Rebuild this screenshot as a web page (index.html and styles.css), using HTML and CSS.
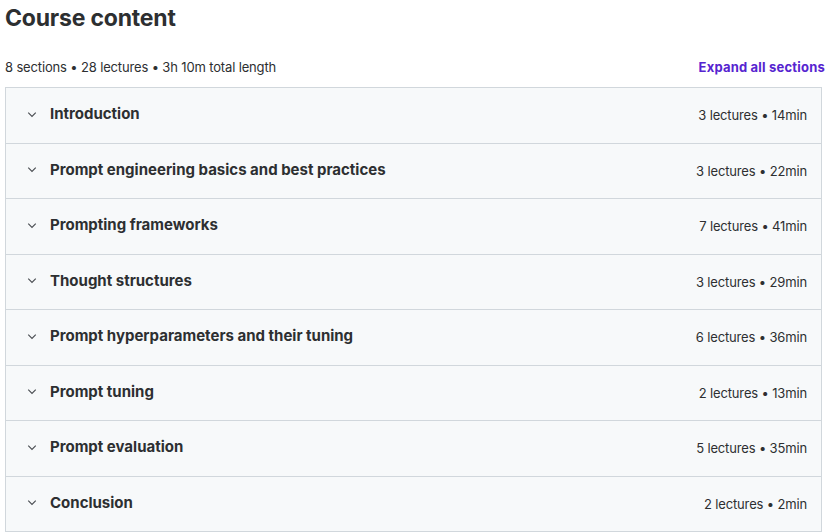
FILE: index.html
```html
<!DOCTYPE html>
<html>
<head>
<meta charset="utf-8">
<link rel="stylesheet" href="styles.css">
</head>
<body>
<div class="wrap">
  <h2 class="title">Course content</h2>
  <div class="summary">
    <span class="stats">8 sections • 28 lectures • 3h 10m total length</span>
    <button class="expand">Expand all sections</button>
  </div>
  <div class="sections">
    <div class="row"><svg class="chev" viewBox="0 0 12 8"><path d="M1.5 1.8 6 6.2l4.5-4.4"/></svg><span class="name">Introduction</span><span class="meta">3 lectures • 14min</span></div>
    <div class="row"><svg class="chev" viewBox="0 0 12 8"><path d="M1.5 1.8 6 6.2l4.5-4.4"/></svg><span class="name">Prompt engineering basics and best practices</span><span class="meta">3 lectures • 22min</span></div>
    <div class="row"><svg class="chev" viewBox="0 0 12 8"><path d="M1.5 1.8 6 6.2l4.5-4.4"/></svg><span class="name">Prompting frameworks</span><span class="meta">7 lectures • 41min</span></div>
    <div class="row"><svg class="chev" viewBox="0 0 12 8"><path d="M1.5 1.8 6 6.2l4.5-4.4"/></svg><span class="name">Thought structures</span><span class="meta">3 lectures • 29min</span></div>
    <div class="row"><svg class="chev" viewBox="0 0 12 8"><path d="M1.5 1.8 6 6.2l4.5-4.4"/></svg><span class="name">Prompt hyperparameters and their tuning</span><span class="meta">6 lectures • 36min</span></div>
    <div class="row"><svg class="chev" viewBox="0 0 12 8"><path d="M1.5 1.8 6 6.2l4.5-4.4"/></svg><span class="name">Prompt tuning</span><span class="meta">2 lectures • 13min</span></div>
    <div class="row"><svg class="chev" viewBox="0 0 12 8"><path d="M1.5 1.8 6 6.2l4.5-4.4"/></svg><span class="name">Prompt evaluation</span><span class="meta">5 lectures • 35min</span></div>
    <div class="row"><svg class="chev" viewBox="0 0 12 8"><path d="M1.5 1.8 6 6.2l4.5-4.4"/></svg><span class="name">Conclusion</span><span class="meta">2 lectures • 2min</span></div>
  </div>
</div>
</body>
</html>
```

FILE: styles.css
```css
* { box-sizing: border-box; }
html, body { margin: 0; padding: 0; background: #fff; }
body {
  font-family: Inter, "Noto Sans", sans-serif;
  color: #2d2f31;
}
.wrap {
  padding: 0 3px 0 5px;
}
.title {
  margin: 0;
  padding-top: 3px;
  font-size: 23px;
  line-height: 30px;
  font-weight: 700;
  letter-spacing: -0.2px;
}
.summary {
  display: flex;
  justify-content: space-between;
  align-items: center;
  margin-top: 24px;
  height: 20px;
  margin-bottom: 10px;
  margin-right: -3px;
}
.stats {
  font-size: 13px;
  letter-spacing: -0.15px;
}
.expand {
  border: 0;
  background: none;
  padding: 0;
  font-family: inherit;
  font-size: 13px;
  font-weight: 700;
  letter-spacing: 0.2px;
  color: #5624d0;
  cursor: pointer;
}
.sections {
  border: 1px solid #d1d7dc;
  border-bottom-width: 0;
}
.row {
  display: flex;
  align-items: center;
  height: 55.5px;
  background: #f7f9fa;
  border-bottom: 1px solid #d1d7dc;
  padding: 0 14px 0 21px;
}
.chev {
  width: 10px;
  height: 7px;
  fill: none;
  stroke: #4a4e52;
  stroke-width: 1.4;
  margin-right: 13px;
  margin-bottom: 2px;
  flex: none;
}
.name {
  font-size: 15px;
  font-weight: 700;
  flex: 1;
  padding-bottom: 3px;
}
.meta {
  font-size: 13px;
  letter-spacing: -0.15px;
}
```
